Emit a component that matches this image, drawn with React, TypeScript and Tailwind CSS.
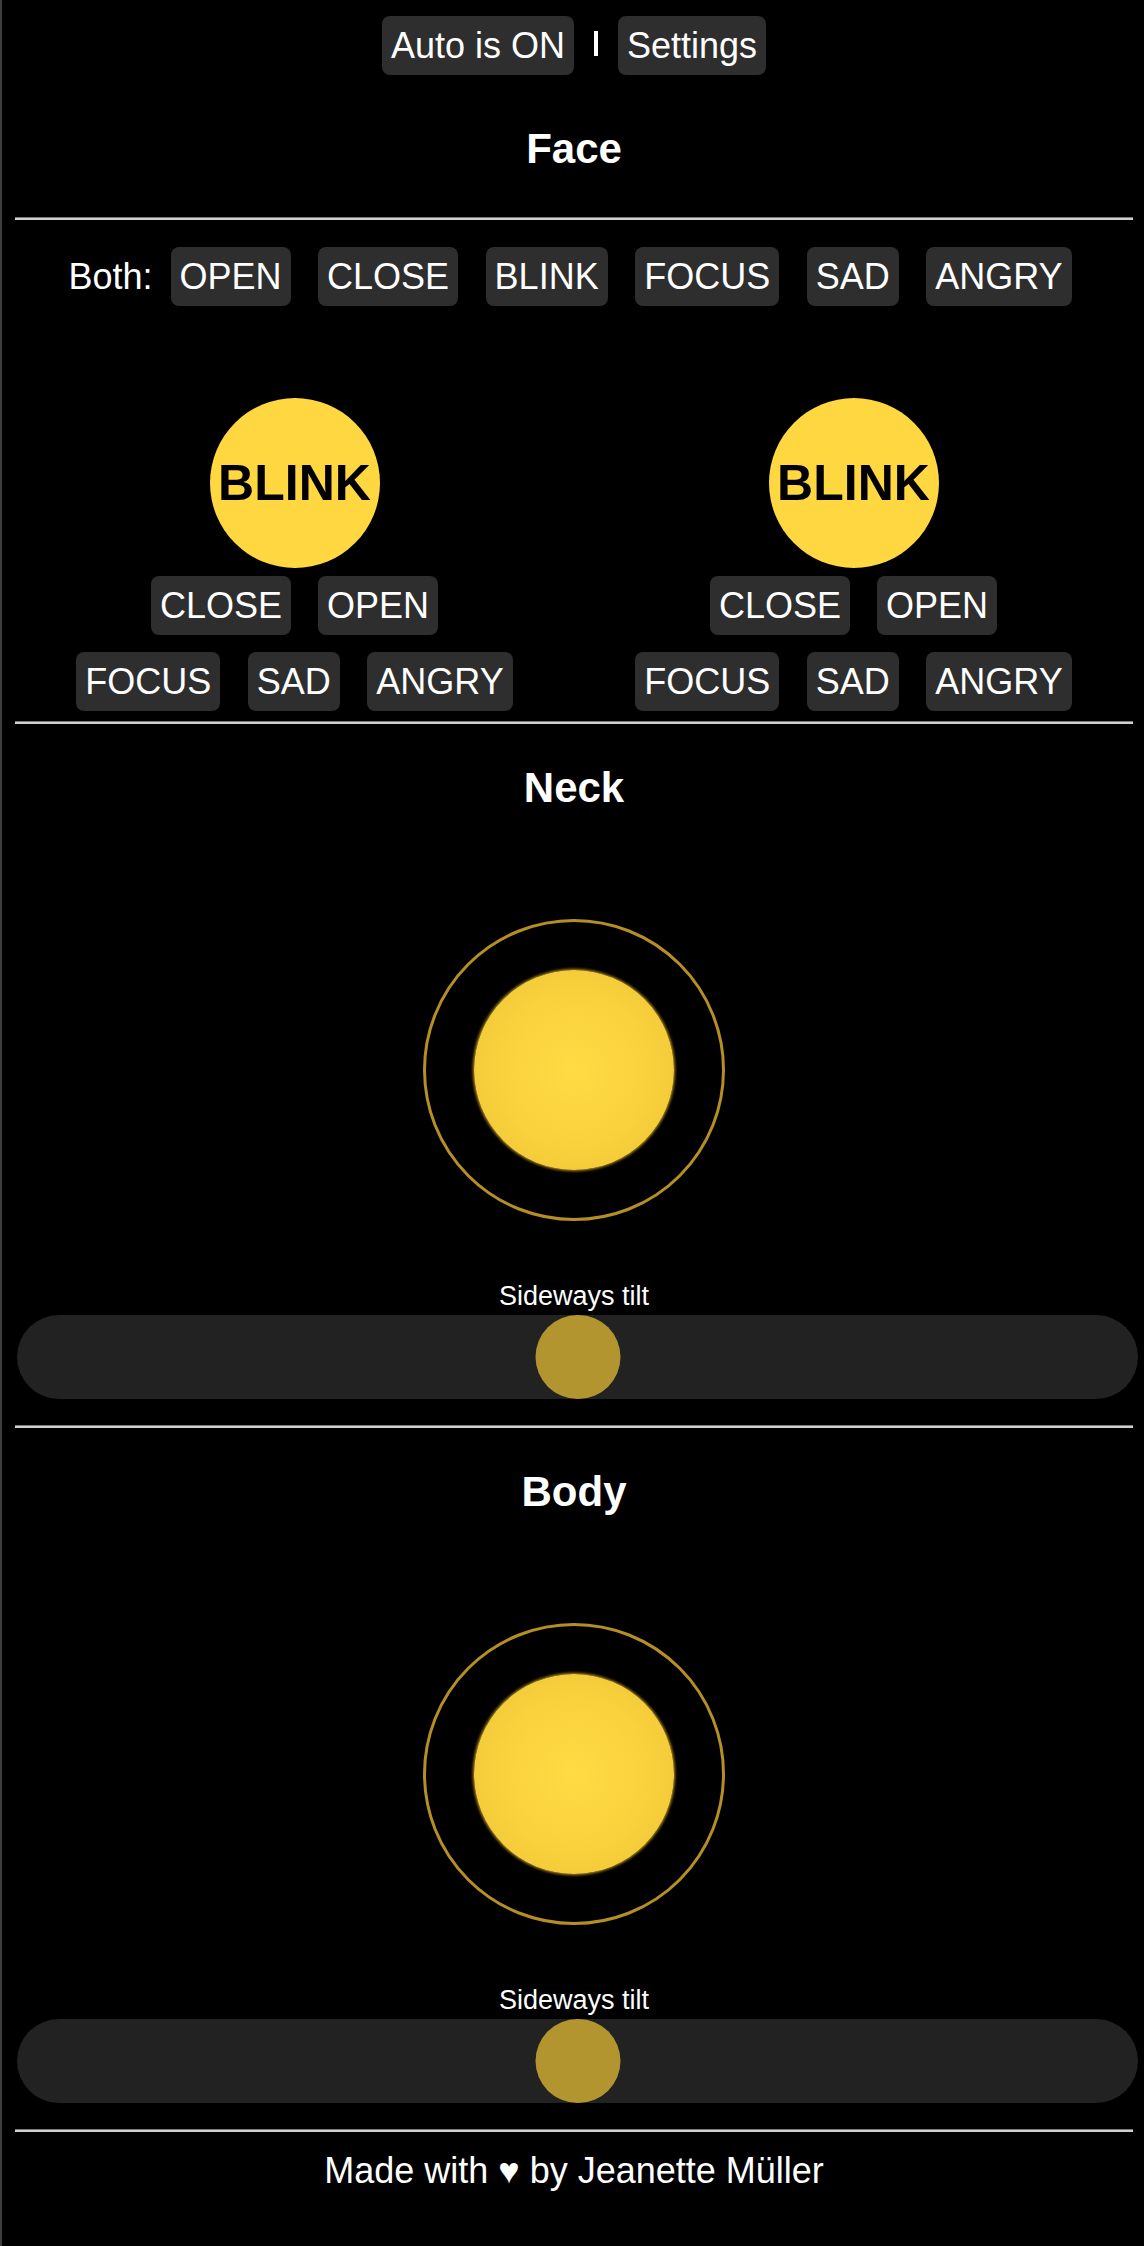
const moods = ['OPEN', 'CLOSE', 'BLINK', 'FOCUS', 'SAD', 'ANGRY'];

function Btn({ label }: { label: string }) {
  return (
    <button className="rounded-[8px] bg-[#2e2e2e] px-[9px] py-[9px] text-[36px] leading-[41px] text-white">
      {label}
    </button>
  );
}

function Divider({ className = '' }: { className?: string }) {
  return <div className={`h-[3px] border-t border-[#7a7a7a] bg-[#d0d0d0] ${className}`} />;
}

function Heading({ title }: { title: string }) {
  return <h2 className="text-center text-[42px] font-bold leading-[48px] text-white">{title}</h2>;
}

function Eye() {
  return (
    <div className="flex flex-col items-center">
      <div className="flex h-[170px] w-[170px] items-center justify-center rounded-full bg-[#ffd740] text-[50px] font-bold text-black">
        BLINK
      </div>
      <div className="mt-[8px] flex gap-[27px]">
        <Btn label="CLOSE" />
        <Btn label="OPEN" />
      </div>
      <div className="mt-[17px] flex gap-[27.5px]">
        <Btn label="FOCUS" />
        <Btn label="SAD" />
        <Btn label="ANGRY" />
      </div>
    </div>
  );
}

function Joystick() {
  return (
    <div className="mt-[107px] flex justify-center">
      <div className="flex h-[302px] w-[302px] items-center justify-center rounded-full border-[3px] border-[#b68f24]">
        <div className="h-[200px] w-[200px] rounded-full bg-[radial-gradient(circle,#ffdb44_0%,#f9d13c_55%,#ecc034_100%)] shadow-[0_0_3px_1px_#b99224]" />
      </div>
    </div>
  );
}

function TiltSlider() {
  return (
    <div>
      <p className="mt-[60px] text-center text-[27px] leading-[31px] text-white">Sideways tilt</p>
      <div className="relative mt-[3px] ml-[2px] h-[84px] w-[1121px] rounded-full bg-[#222222]">
        <div className="absolute top-0 left-1/2 h-[84px] w-[85px] -translate-x-1/2 rounded-full bg-[#b39530]" />
      </div>
    </div>
  );
}

function MotionSection({ title }: { title: string }) {
  return (
    <section>
      <div className="mt-[40px]">
        <Heading title={title} />
      </div>
      <Joystick />
      <TiltSlider />
      <Divider className="mt-[26px]" />
    </section>
  );
}

export default function App() {
  return (
    <div
      className="min-h-screen border-l-2 border-[#3f3f3f] bg-black pr-[11px] pl-[13px] text-white"
      style={{ fontFamily: '"Liberation Sans", Arial, sans-serif' }}
    >
      <nav className="flex items-center justify-center gap-[20px] pt-[16px]">
        <Btn label="Auto is ON" />
        <span aria-hidden className="mb-[4px] inline-block h-[25px] w-[4px] bg-white" />
        <Btn label="Settings" />
      </nav>

      <section>
        <div className="mt-[50px]">
          <Heading title="Face" />
        </div>
        <Divider className="mt-[44px]" />

        <div className="mt-[27px] flex items-center justify-center pr-[8px]">
          <span className="mr-[18px] text-[36px] leading-[41px]">Both:</span>
          <div className="flex gap-[27.5px]">
            {moods.map((m) => (
              <Btn key={m} label={m} />
            ))}
          </div>
        </div>

        <div className="mt-[92px] grid grid-cols-2">
          <Eye />
          <Eye />
        </div>
        <Divider className="mt-[10px]" />
      </section>

      <MotionSection title="Neck" />
      <MotionSection title="Body" />

      <footer className="mt-[18px] pb-[40px] text-center text-[36px] leading-[41px] text-white">
        Made with ♥ by Jeanette Müller
      </footer>
    </div>
  );
}
